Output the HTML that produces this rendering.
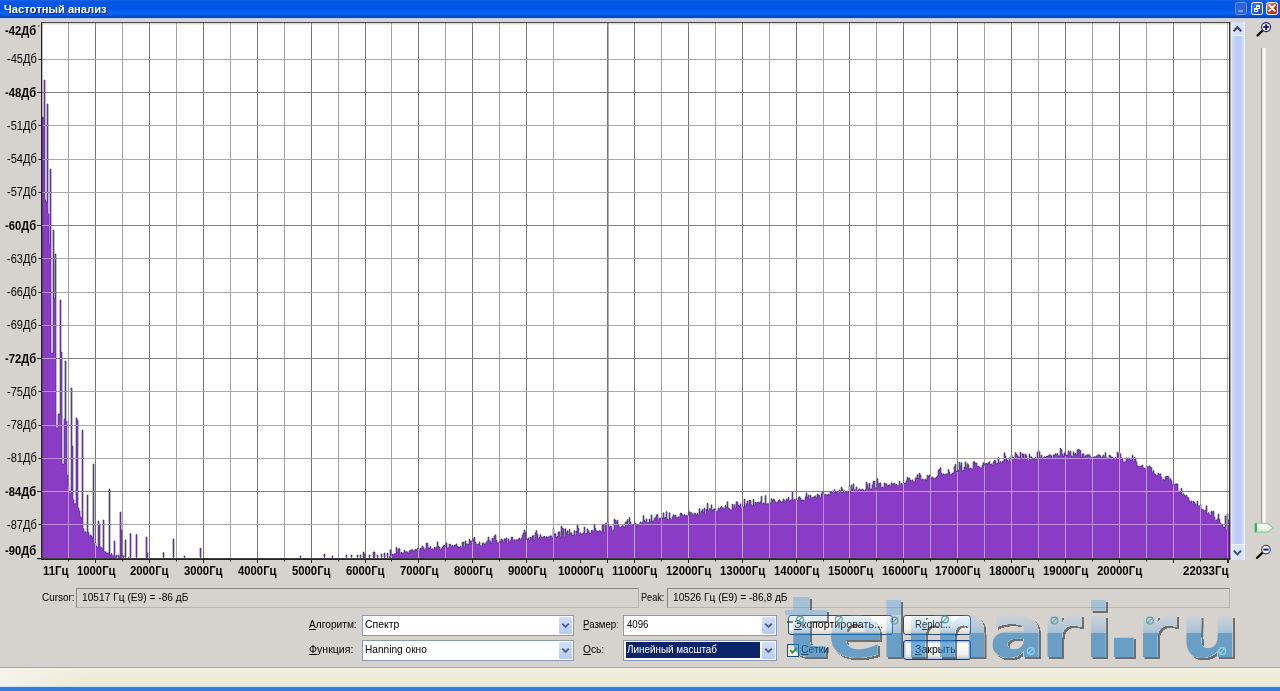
<!DOCTYPE html>
<html lang="ru"><head><meta charset="utf-8"><title>Частотный анализ</title>
<style>
html,body{margin:0;padding:0}
body{width:1280px;height:691px;overflow:hidden;position:relative;background:#d6d3ce;font-family:"Liberation Sans",sans-serif}
.abs{position:absolute}
.t{position:absolute;white-space:pre;line-height:1;transform-origin:0 50%;font-family:"Liberation Sans",sans-serif}
.t u{text-decoration:underline;text-underline-offset:1px}
#titlebar{position:absolute;left:0;top:0;width:1280px;height:18px;background:linear-gradient(#1a68ec 0,#0457e6 1.5px,#0054e4 9px,#0360f2 11.5px,#0668f8 13px,#0458e2 15px,#0c49c2 16.5px,#143fa8 18px)}
#tline{position:absolute;left:0;top:18px;width:1280px;height:1.6px;background:linear-gradient(#b4c8f2,#d3dbe8)}
.tb{position:absolute;top:2px;width:12.4px;height:12.6px;border-radius:2.5px;box-sizing:border-box;border:1px solid #fff}
.field{position:absolute;box-sizing:border-box;border:1px solid #8a8782;border-right-color:#b8b5b0;border-bottom-color:#b8b5b0;background:#d6d3ce}
.combo{position:absolute;box-sizing:border-box;border:1px solid #8b9bb5;background:#fff}
.combo .dd{position:absolute;right:1px;top:1px;bottom:1px;width:13px;background:linear-gradient(#d3defa,#b8cbf6);border-radius:1.5px}
.combo .dd svg{position:absolute;left:0;top:0}
.btn{position:absolute;box-sizing:border-box;border:1px solid #2d4f7c;border-radius:3px;background:linear-gradient(#fff,#f3f2ec 70%,#d9d6ca)}
</style></head><body>
<div id="titlebar"></div><div id="tline"></div>
<div class="tb" style="left:1235px;background:#2d63d6;border-color:#6d97ea"><div class="abs" style="left:2px;top:7px;width:5px;height:2px;background:#7da0ea"></div></div>
<div class="tb" style="left:1250.5px;background:linear-gradient(135deg,#4a7fe8,#1c47b8)"><div class="abs" style="left:4px;top:2px;width:4px;height:4px;border:1px solid #fff;border-top-width:2px;box-sizing:border-box"></div><div class="abs" style="left:2px;top:4.5px;width:4.5px;height:4px;border:1px solid #fff;border-top-width:2px;box-sizing:border-box;background:#2a58c8"></div></div>
<div class="tb" style="left:1265.5px;background:linear-gradient(135deg,#e88c6c,#c43a1c 60%,#b5310f)"><svg class="abs" style="left:0;top:0" width="10" height="10" viewBox="0 0 10 10"><path d="M2.2 2.2L7.8 7.8M7.8 2.2L2.2 7.8" stroke="#fff" stroke-width="1.8" stroke-linecap="round"/></svg></div>
<svg id="plot" width="1280" height="691" viewBox="0 0 1280 691" style="position:absolute;left:0;top:0;filter:blur(0.35px)"><defs><clipPath id="cp"><path d="M42,558V117.0H43V118.0H44V80H45V200.0H46V202.0H47V104H48V214.0H49V245.0H50V169H51V353.0H52V353.0H53V230H54V298.0H55V254H56V428.0H57V428.0H58V414.0H59V414.0H60V300H61V352.0H62V464.0H63V464.0H64V419.0H65V361H66V421.0H67V475.1H68V486.3H69V492.8H70V493.9H71V388H72V446H73V499.8H74V504.0H75V503.7H76V418H77V420H78V508.0H79V510.6H80V516.6H81V518.1H82V430H83V528.6H84V531.9H85V531.7H86V532.5H87V495H88V532.2H89V537.0H90V534.9H91V536.2H92V538.1H93V464H94V544.6H95V542.9H96V546.4H97V547.7H98V521H99V524H100V546.8H101V547.5H102V549.0H103V520H104V551.6H105V551.5H106V553.2H107V553.0H108V552.6H109V489H110V555.4H111V553.5H112V555.5H113V555.6H114V541H115V557.2H116V555.3H117V558H118V555.1H119V556.8H120V512H121V530H122V557.7H123V555.7H124V558H125V540H126V558H127V558H128V557.1H129V558H130V533.5H131V558H132V558H133V558H134V558H135V558H136V534.5H137V558H138V558H139V558H140V558H141V558H142V558H143V558H144V558H145V558H146V537H147V553H148V558H149V558H150V558H151V558H152V558H153V558H154V558H155V558H156V558H157V558H158V558H159V558H160V558H161V558H162V558H163V552.5H164V558H165V558H166V558H167V558H168V558H169V558H170V558H171V558H172V558H173V539H174V558H175V558H176V558H177V558H178V558H179V558H180V558H181V558H182V558H183V558H184V556H185V558H186V558H187V558H188V558H189V558H190V558H191V558H192V558H193V558H194V558H195V558H196V558H197V558H198V558H199V558H200V548H201V558H202V558H203V558H204V558H205V558H206V558H207V558H208V558H209V558H210V558H211V558H212V558H213V558H214V558H215V558H216V558H217V558H218V558H219V558H220V558H221V558H222V558H223V558H224V558H225V558H226V558H227V558H228V558H229V558H230V558H231V558H232V558H233V558H234V558H235V558H236V558H237V558H238V558H239V558H240V558H241V558H242V558H243V558H244V558H245V558H246V558H247V558H248V558H249V558H250V558H251V558H252V558H253V558H254V558H255V558H256V558H257V558H258V558H259V558H260V558H261V558H262V558H263V558H264V558H265V558H266V558H267V558H268V558H269V558H270V558H271V558H272V558H273V558H274V558H275V558H276V558H277V558H278V558H279V558H280V558H281V558H282V558H283V558H284V558H285V558H286V558H287V558H288V558H289V558H290V558H291V558H292V558H293V558H294V558H295V558H296V558H297V558H298V558H299V558H300V556H301V558H302V558H303V558H304V558H305V558H306V558H307V558H308V558H309V558H310V558H311V558H312V558H313V558H314V558H315V558H316V558H317V558H318V558H319V558H320V558H321V558H322V558H323V558H324V554H325V558H326V558H327V558H328V558H329V558H330V558H331V558H332V556H333V558H334V558H335V558H336V558H337V558H338V558H339V558H340V558H341V558H342V558H343V558H344V558H345V558H346V555H347V558H348V558H349V558H350V558H351V555H352V558H353V558H354V558H355V558H356V558H357V555H358V558H359V558H360V555H361V558H362V558H363V552H364V554H365V558H366V558H367V558H368V558H369V555H370V558H371V558H372V558H373V552H374V552H375V558H376V558H377V555H378V558H379V558H380V558H381V554H382V558H383V558H384V553H385V558H386V558H387V553H388V558H389V556.6H390V549.7H391V555.3H392V554.0H393V554.5H394V553.7H395V553.6H396V547.4H397V552.1H398V548.8H399V548.5H400V553.6H401V552.3H402V553.2H403V552.8H404V550.4H405V551.7H406V551.6H407V552.0H408V553.3H409V550.9H410V550.1H411V549.8H412V549.7H413V551.2H414V550.5H415V549.3H416V550.0H417V548.4H418V549.0H419V550.9H420V548.4H421V547.9H422V546.1H423V547.5H424V550.3H425V548.6H426V543.0H427V543.3H428V547.6H429V548.4H430V546.6H431V549.3H432V548.8H433V549.9H434V547.4H435V547.6H436V547.3H437V541.9H438V546.4H439V547.1H440V550.0H441V548.7H442V547.4H443V545.5H444V545.4H445V547.0H446V542.8H447V548.3H448V547.5H449V544.0H450V544.5H451V546.5H452V545.2H453V546.9H454V545.3H455V545.0H456V543.9H457V546.3H458V547.3H459V547.4H460V546.1H461V547.6H462V542.4H463V542.1H464V546.7H465V540.9H466V543.9H467V544.0H468V544.4H469V539.4H470V541.0H471V541.0H472V541.5H473V539.0H474V537.3H475V542.4H476V544.0H477V544.5H478V544.2H479V541.9H480V546.0H481V545.6H482V543.3H483V542.8H484V544.4H485V543.6H486V541.9H487V540.8H488V537.0H489V540.6H490V540.9H491V543.3H492V538.2H493V538.5H494V535.9H495V534.8H496V540.2H497V542.8H498V542.6H499V542.7H500V541.0H501V539.0H502V540.0H503V542.2H504V538.8H505V539.4H506V538.0H507V543.6H508V538.9H509V541.9H510V540.6H511V537.2H512V537.3H513V540.6H514V539.8H515V539.8H516V539.8H517V540.1H518V539.1H519V538.0H520V539.9H521V538.7H522V535.2H523V533.4H524V530.0H525V532.3H526V539.7H527V539.4H528V537.9H529V540.5H530V537.2H531V537.8H532V535.8H533V535.5H534V540.3H535V532.5H536V530.5H537V534.4H538V538.6H539V537.3H540V534.7H541V537.1H542V537.6H543V536.7H544V536.4H545V538.3H546V536.6H547V537.6H548V536.9H549V536.5H550V535.7H551V536.1H552V538.1H553V529.0H554V534.0H555V533.6H556V537.4H557V536.4H558V531.9H559V531.7H560V537.1H561V526.1H562V528.0H563V528.9H564V536.9H565V528.7H566V532.6H567V530.9H568V534.8H569V529.5H570V532.6H571V532.9H572V535.2H573V535.3H574V530.5H575V535.8H576V531.3H577V525.2H578V528.3H579V535.2H580V532.8H581V534.4H582V533.7H583V532.9H584V527.2H585V533.6H586V533.4H587V529.0H588V530.5H589V532.9H590V533.4H591V530.3H592V530.6H593V530.8H594V524.2H595V528.4H596V530.8H597V531.2H598V531.7H599V530.6H600V531.1H601V531.7H602V525.4H603V524.5H604V531.9H605V523.5H606V523.2H607V521.9H608V525.6H609V526.5H610V526.2H611V526.5H612V530.9H613V530.0H614V519.3H615V520.3H616V522.1H617V520.1H618V525.4H619V526.8H620V527.8H621V526.4H622V525.5H623V526.0H624V527.4H625V522.1H626V521.7H627V519.5H628V524.7H629V517.6H630V522.0H631V525.9H632V525.3H633V524.9H634V523.4H635V523.2H636V526.0H637V524.7H638V525.6H639V523.7H640V521.9H641V524.0H642V521.9H643V515.5H644V520.4H645V521.5H646V518.8H647V522.5H648V522.5H649V519.1H650V521.3H651V514.8H652V520.8H653V520.7H654V518.1H655V517.6H656V514.8H657V514.6H658V520.5H659V518.2H660V518.0H661V518.3H662V518.1H663V512.8H664V517.9H665V517.4H666V511.5H667V519.1H668V519.9H669V512.7H670V518.5H671V519.5H672V516.7H673V514.7H674V516.2H675V515.2H676V517.3H677V517.9H678V517.0H679V516.9H680V513.2H681V513.3H682V514.5H683V515.8H684V514.5H685V515.9H686V515.2H687V515.8H688V515.6H689V511.7H690V512.6H691V512.6H692V514.0H693V514.8H694V513.1H695V513.7H696V515.3H697V513.5H698V514.9H699V508.6H700V512.5H701V511.4H702V509.4H703V512.2H704V508.1H705V513.5H706V509.4H707V503.4H708V510.6H709V508.7H710V508.6H711V504.8H712V510.4H713V509.3H714V508.7H715V509.7H716V511.5H717V511.1H718V508.0H719V508.9H720V507.5H721V506.4H722V507.8H723V507.8H724V508.7H725V505.6H726V507.1H727V501.6H728V508.0H729V508.6H730V509.8H731V510.0H732V504.2H733V507.9H734V504.6H735V508.2H736V501.6H737V502.1H738V505.3H739V506.4H740V503.8H741V508.5H742V506.5H743V507.3H744V499.1H745V505.7H746V503.7H747V501.0H748V504.5H749V500.2H750V500.3H751V504.5H752V505.6H753V499.4H754V505.1H755V502.3H756V502.8H757V502.4H758V502.1H759V503.0H760V501.5H761V496.2H762V504.6H763V502.9H764V503.5H765V495.5H766V504.1H767V503.6H768V503.9H769V503.0H770V503.0H771V498.6H772V499.9H773V499.2H774V499.7H775V501.7H776V502.7H777V502.2H778V500.4H779V499.8H780V501.3H781V502.4H782V501.4H783V499.0H784V500.5H785V500.9H786V499.1H787V499.8H788V497.3H789V501.1H790V500.3H791V499.6H792V492.4H793V500.4H794V499.5H795V499.8H796V500.0H797V500.3H798V497.6H799V496.5H800V498.4H801V500.4H802V499.9H803V500.3H804V500.7H805V496.8H806V492.9H807V497.4H808V495.2H809V498.9H810V495.2H811V497.9H812V497.6H813V497.0H814V496.6H815V495.7H816V498.0H817V494.2H818V495.0H819V495.7H820V498.4H821V493.8H822V492.1H823V493.2H824V494.9H825V494.4H826V494.8H827V495.3H828V493.9H829V495.3H830V492.2H831V492.1H832V491.1H833V494.0H834V489.5H835V492.3H836V491.6H837V492.1H838V493.7H839V489.9H840V492.5H841V487.3H842V488.8H843V492.2H844V490.7H845V492.7H846V492.1H847V491.2H848V492.3H849V485.9H850V491.9H851V485.0H852V488.8H853V483.9H854V489.9H855V489.6H856V487.0H857V491.2H858V489.9H859V488.8H860V490.0H861V490.0H862V489.0H863V490.1H864V491.3H865V489.6H866V482.0H867V484.6H868V488.9H869V483.2H870V488.8H871V489.0H872V484.8H873V481.1H874V481.1H875V487.6H876V489.5H877V478.5H878V483.6H879V483.2H880V482.9H881V487.5H882V486.9H883V487.9H884V483.0H885V483.5H886V483.8H887V485.7H888V485.4H889V484.8H890V487.1H891V482.7H892V483.8H893V483.6H894V483.2H895V484.9H896V484.2H897V485.5H898V485.7H899V481.4H900V485.5H901V483.4H902V484.8H903V482.9H904V483.1H905V483.0H906V481.0H907V477.3H908V478.4H909V478.3H910V480.4H911V480.7H912V479.8H913V481.6H914V482.2H915V478.2H916V477.6H917V474.6H918V478.4H919V473.3H920V475.2H921V480.0H922V479.0H923V479.6H924V480.9H925V479.0H926V480.2H927V475.4H928V476.4H929V475.1H930V476.0H931V478.1H932V477.0H933V478.3H934V478.7H935V478.2H936V477.0H937V476.3H938V470.1H939V469.4H940V467.6H941V473.1H942V474.8H943V473.9H944V474.8H945V474.1H946V473.9H947V474.1H948V469.5H949V472.1H950V474.8H951V474.4H952V473.1H953V472.7H954V466.5H955V464.3H956V471.3H957V472.0H958V470.2H959V462.3H960V466.1H961V462.7H962V471.0H963V470.3H964V467.2H965V462.0H966V468.0H967V463.6H968V464.6H969V469.0H970V468.0H971V468.6H972V468.8H973V462.1H974V461.5H975V463.3H976V463.0H977V466.2H978V466.2H979V467.3H980V467.7H981V467.8H982V465.3H983V462.6H984V465.6H985V463.8H986V463.2H987V464.3H988V462.6H989V461.6H990V464.4H991V464.0H992V465.3H993V462.1H994V460.4H995V460.6H996V463.9H997V463.3H998V457.7H999V463.1H1000V461.7H1001V462.5H1002V461.4H1003V461.0H1004V452.7H1005V456.0H1006V459.3H1007V460.3H1008V461.7H1009V457.7H1010V461.8H1011V455.1H1012V456.9H1013V457.2H1014V458.6H1015V452.5H1016V454.1H1017V455.5H1018V456.7H1019V457.2H1020V452.1H1021V458.4H1022V453.7H1023V454.3H1024V458.3H1025V454.0H1026V455.7H1027V459.6H1028V460.5H1029V454.2H1030V456.7H1031V456.7H1032V459.2H1033V458.5H1034V459.0H1035V457.5H1036V458.5H1037V452.4H1038V451.0H1039V451.5H1040V457.7H1041V455.2H1042V458.5H1043V457.5H1044V456.7H1045V457.4H1046V456.4H1047V456.4H1048V455.5H1049V454.6H1050V455.1H1051V455.8H1052V457.6H1053V454.9H1054V455.2H1055V453.7H1056V454.5H1057V453.5H1058V455.8H1059V456.0H1060V448.4H1061V449.9H1062V454.2H1063V456.3H1064V452.8H1065V456.1H1066V455.0H1067V455.1H1068V450.9H1069V452.5H1070V451.4H1071V455.8H1072V457.0H1073V451.9H1074V454.3H1075V453.4H1076V455.1H1077V449.9H1078V449.2H1079V450.1H1080V450.5H1081V457.3H1082V454.3H1083V453.5H1084V457.0H1085V455.7H1086V454.9H1087V454.7H1088V454.8H1089V454.6H1090V456.6H1091V457.6H1092V457.5H1093V457.3H1094V456.7H1095V457.2H1096V455.9H1097V455.5H1098V454.5H1099V455.2H1100V455.7H1101V458.2H1102V457.0H1103V455.1H1104V456.5H1105V452.5H1106V457.6H1107V458.1H1108V458.3H1109V455.1H1110V455.7H1111V457.0H1112V457.2H1113V458.8H1114V458.2H1115V457.5H1116V458.6H1117V452.2H1118V453.8H1119V452.5H1120V453.9H1121V457.7H1122V459.1H1123V462.0H1124V462.0H1125V461.6H1126V457.9H1127V458.8H1128V457.8H1129V458.8H1130V459.6H1131V459.9H1132V455.4H1133V462.0H1134V457.4H1135V458.2H1136V461.8H1137V465.8H1138V466.3H1139V466.6H1140V466.4H1141V465.9H1142V465.1H1143V467.8H1144V468.4H1145V469.8H1146V466.5H1147V466.7H1148V466.7H1149V465.9H1150V467.0H1151V467.7H1152V472.8H1153V470.7H1154V473.7H1155V474.2H1156V475.9H1157V475.2H1158V473.1H1159V474.5H1160V473.8H1161V477.1H1162V480.5H1163V479.2H1164V480.4H1165V476.6H1166V476.2H1167V476.2H1168V476.5H1169V480.9H1170V478.6H1171V480.5H1172V484.6H1173V485.5H1174V484.7H1175V484.2H1176V483.6H1177V484.1H1178V491.2H1179V491.1H1180V493.1H1181V488.3H1182V494.6H1183V493.7H1184V495.0H1185V496.1H1186V495.4H1187V497.2H1188V497.9H1189V500.7H1190V501.7H1191V501.1H1192V503.6H1193V501.2H1194V502.4H1195V504.2H1196V504.9H1197V501.1H1198V505.8H1199V505.9H1200V505.1H1201V509.0H1202V509.6H1203V510.0H1204V510.8H1205V510.3H1206V505.8H1207V513.5H1208V512.6H1209V514.7H1210V515.4H1211V511.2H1212V512.3H1213V511.3H1214V517.3H1215V520.7H1216V520.3H1217V519.1H1218V514.0H1219V519.3H1220V523.2H1221V524.4H1222V524.7H1223V527.2H1224V527.3H1225V516H1226V529.8H1227V514H1228V520H1229V558Z"/></clipPath><clipPath id="box"><rect x="42" y="23" width="1187" height="535"/></clipPath><clipPath id="box2"><rect x="42.6" y="23" width="1186.4" height="534.1"/></clipPath></defs><rect x="41" y="22" width="1189" height="537" fill="#fff"/><g clip-path="url(#box)"><rect x="68" y="23" width="1" height="535" fill="#a2a2a2"/><rect x="95" y="23" width="1" height="535" fill="#747474"/><rect x="122" y="23" width="1" height="535" fill="#a2a2a2"/><rect x="149" y="23" width="1" height="535" fill="#747474"/><rect x="176" y="23" width="1" height="535" fill="#a2a2a2"/><rect x="203" y="23" width="1" height="535" fill="#747474"/><rect x="230" y="23" width="1" height="535" fill="#a2a2a2"/><rect x="257" y="23" width="1" height="535" fill="#747474"/><rect x="284" y="23" width="1" height="535" fill="#a2a2a2"/><rect x="311" y="23" width="1" height="535" fill="#747474"/><rect x="338" y="23" width="1" height="535" fill="#a2a2a2"/><rect x="365" y="23" width="1" height="535" fill="#747474"/><rect x="391" y="23" width="1" height="535" fill="#a2a2a2"/><rect x="418" y="23" width="1" height="535" fill="#747474"/><rect x="445" y="23" width="1" height="535" fill="#a2a2a2"/><rect x="472" y="23" width="1" height="535" fill="#747474"/><rect x="499" y="23" width="1" height="535" fill="#a2a2a2"/><rect x="526" y="23" width="1" height="535" fill="#747474"/><rect x="553" y="23" width="1" height="535" fill="#a2a2a2"/><rect x="607" y="23" width="1" height="535" fill="#747474"/><rect x="634" y="23" width="1" height="535" fill="#747474"/><rect x="661" y="23" width="1" height="535" fill="#a2a2a2"/><rect x="688" y="23" width="1" height="535" fill="#747474"/><rect x="715" y="23" width="1" height="535" fill="#a2a2a2"/><rect x="742" y="23" width="1" height="535" fill="#747474"/><rect x="769" y="23" width="1" height="535" fill="#a2a2a2"/><rect x="796" y="23" width="1" height="535" fill="#747474"/><rect x="823" y="23" width="1" height="535" fill="#a2a2a2"/><rect x="849" y="23" width="1" height="535" fill="#747474"/><rect x="876" y="23" width="1" height="535" fill="#a2a2a2"/><rect x="903" y="23" width="1" height="535" fill="#747474"/><rect x="930" y="23" width="1" height="535" fill="#a2a2a2"/><rect x="957" y="23" width="1" height="535" fill="#747474"/><rect x="984" y="23" width="1" height="535" fill="#a2a2a2"/><rect x="1011" y="23" width="1" height="535" fill="#747474"/><rect x="1038" y="23" width="1" height="535" fill="#a2a2a2"/><rect x="1065" y="23" width="1" height="535" fill="#747474"/><rect x="1092" y="23" width="1" height="535" fill="#a2a2a2"/><rect x="1119" y="23" width="1" height="535" fill="#747474"/><rect x="1146" y="23" width="1" height="535" fill="#a2a2a2"/><rect x="1173" y="23" width="1" height="535" fill="#747474"/><rect x="1200" y="23" width="1" height="535" fill="#a2a2a2"/><rect x="1227" y="23" width="1" height="535" fill="#747474" fill-opacity="0.55"/><rect x="42" y="59" width="1187" height="1" fill="#aaaaaa"/><rect x="42" y="92" width="1187" height="1" fill="#828282"/><rect x="42" y="125" width="1187" height="1" fill="#aaaaaa"/><rect x="42" y="159" width="1187" height="1" fill="#aaaaaa"/><rect x="42" y="192" width="1187" height="1" fill="#aaaaaa"/><rect x="42" y="225" width="1187" height="1" fill="#828282"/><rect x="42" y="258" width="1187" height="1" fill="#aaaaaa"/><rect x="42" y="292" width="1187" height="1" fill="#aaaaaa"/><rect x="42" y="325" width="1187" height="1" fill="#aaaaaa"/><rect x="42" y="358" width="1187" height="1" fill="#828282"/><rect x="42" y="391" width="1187" height="1" fill="#aaaaaa"/><rect x="42" y="425" width="1187" height="1" fill="#aaaaaa"/><rect x="42" y="458" width="1187" height="1" fill="#aaaaaa"/><rect x="42" y="491" width="1187" height="1" fill="#828282"/><rect x="42" y="524" width="1187" height="1" fill="#aaaaaa"/></g><g clip-path="url(#box)"><rect x="608" y="23" width="1" height="535" fill="#707070" fill-opacity="0.55"/></g><path d="M42,558V117.0H43V118.0H44V80H45V200.0H46V202.0H47V104H48V214.0H49V245.0H50V169H51V353.0H52V353.0H53V230H54V298.0H55V254H56V428.0H57V428.0H58V414.0H59V414.0H60V300H61V352.0H62V464.0H63V464.0H64V419.0H65V361H66V421.0H67V475.1H68V486.3H69V492.8H70V493.9H71V388H72V446H73V499.8H74V504.0H75V503.7H76V418H77V420H78V508.0H79V510.6H80V516.6H81V518.1H82V430H83V528.6H84V531.9H85V531.7H86V532.5H87V495H88V532.2H89V537.0H90V534.9H91V536.2H92V538.1H93V464H94V544.6H95V542.9H96V546.4H97V547.7H98V521H99V524H100V546.8H101V547.5H102V549.0H103V520H104V551.6H105V551.5H106V553.2H107V553.0H108V552.6H109V489H110V555.4H111V553.5H112V555.5H113V555.6H114V541H115V557.2H116V555.3H117V558H118V555.1H119V556.8H120V512H121V530H122V557.7H123V555.7H124V558H125V540H126V558H127V558H128V557.1H129V558H130V533.5H131V558H132V558H133V558H134V558H135V558H136V534.5H137V558H138V558H139V558H140V558H141V558H142V558H143V558H144V558H145V558H146V537H147V553H148V558H149V558H150V558H151V558H152V558H153V558H154V558H155V558H156V558H157V558H158V558H159V558H160V558H161V558H162V558H163V552.5H164V558H165V558H166V558H167V558H168V558H169V558H170V558H171V558H172V558H173V539H174V558H175V558H176V558H177V558H178V558H179V558H180V558H181V558H182V558H183V558H184V556H185V558H186V558H187V558H188V558H189V558H190V558H191V558H192V558H193V558H194V558H195V558H196V558H197V558H198V558H199V558H200V548H201V558H202V558H203V558H204V558H205V558H206V558H207V558H208V558H209V558H210V558H211V558H212V558H213V558H214V558H215V558H216V558H217V558H218V558H219V558H220V558H221V558H222V558H223V558H224V558H225V558H226V558H227V558H228V558H229V558H230V558H231V558H232V558H233V558H234V558H235V558H236V558H237V558H238V558H239V558H240V558H241V558H242V558H243V558H244V558H245V558H246V558H247V558H248V558H249V558H250V558H251V558H252V558H253V558H254V558H255V558H256V558H257V558H258V558H259V558H260V558H261V558H262V558H263V558H264V558H265V558H266V558H267V558H268V558H269V558H270V558H271V558H272V558H273V558H274V558H275V558H276V558H277V558H278V558H279V558H280V558H281V558H282V558H283V558H284V558H285V558H286V558H287V558H288V558H289V558H290V558H291V558H292V558H293V558H294V558H295V558H296V558H297V558H298V558H299V558H300V556H301V558H302V558H303V558H304V558H305V558H306V558H307V558H308V558H309V558H310V558H311V558H312V558H313V558H314V558H315V558H316V558H317V558H318V558H319V558H320V558H321V558H322V558H323V558H324V554H325V558H326V558H327V558H328V558H329V558H330V558H331V558H332V556H333V558H334V558H335V558H336V558H337V558H338V558H339V558H340V558H341V558H342V558H343V558H344V558H345V558H346V555H347V558H348V558H349V558H350V558H351V555H352V558H353V558H354V558H355V558H356V558H357V555H358V558H359V558H360V555H361V558H362V558H363V552H364V554H365V558H366V558H367V558H368V558H369V555H370V558H371V558H372V558H373V552H374V552H375V558H376V558H377V555H378V558H379V558H380V558H381V554H382V558H383V558H384V553H385V558H386V558H387V553H388V558H389V556.6H390V549.7H391V555.3H392V554.0H393V554.5H394V553.7H395V553.6H396V547.4H397V552.1H398V548.8H399V548.5H400V553.6H401V552.3H402V553.2H403V552.8H404V550.4H405V551.7H406V551.6H407V552.0H408V553.3H409V550.9H410V550.1H411V549.8H412V549.7H413V551.2H414V550.5H415V549.3H416V550.0H417V548.4H418V549.0H419V550.9H420V548.4H421V547.9H422V546.1H423V547.5H424V550.3H425V548.6H426V543.0H427V543.3H428V547.6H429V548.4H430V546.6H431V549.3H432V548.8H433V549.9H434V547.4H435V547.6H436V547.3H437V541.9H438V546.4H439V547.1H440V550.0H441V548.7H442V547.4H443V545.5H444V545.4H445V547.0H446V542.8H447V548.3H448V547.5H449V544.0H450V544.5H451V546.5H452V545.2H453V546.9H454V545.3H455V545.0H456V543.9H457V546.3H458V547.3H459V547.4H460V546.1H461V547.6H462V542.4H463V542.1H464V546.7H465V540.9H466V543.9H467V544.0H468V544.4H469V539.4H470V541.0H471V541.0H472V541.5H473V539.0H474V537.3H475V542.4H476V544.0H477V544.5H478V544.2H479V541.9H480V546.0H481V545.6H482V543.3H483V542.8H484V544.4H485V543.6H486V541.9H487V540.8H488V537.0H489V540.6H490V540.9H491V543.3H492V538.2H493V538.5H494V535.9H495V534.8H496V540.2H497V542.8H498V542.6H499V542.7H500V541.0H501V539.0H502V540.0H503V542.2H504V538.8H505V539.4H506V538.0H507V543.6H508V538.9H509V541.9H510V540.6H511V537.2H512V537.3H513V540.6H514V539.8H515V539.8H516V539.8H517V540.1H518V539.1H519V538.0H520V539.9H521V538.7H522V535.2H523V533.4H524V530.0H525V532.3H526V539.7H527V539.4H528V537.9H529V540.5H530V537.2H531V537.8H532V535.8H533V535.5H534V540.3H535V532.5H536V530.5H537V534.4H538V538.6H539V537.3H540V534.7H541V537.1H542V537.6H543V536.7H544V536.4H545V538.3H546V536.6H547V537.6H548V536.9H549V536.5H550V535.7H551V536.1H552V538.1H553V529.0H554V534.0H555V533.6H556V537.4H557V536.4H558V531.9H559V531.7H560V537.1H561V526.1H562V528.0H563V528.9H564V536.9H565V528.7H566V532.6H567V530.9H568V534.8H569V529.5H570V532.6H571V532.9H572V535.2H573V535.3H574V530.5H575V535.8H576V531.3H577V525.2H578V528.3H579V535.2H580V532.8H581V534.4H582V533.7H583V532.9H584V527.2H585V533.6H586V533.4H587V529.0H588V530.5H589V532.9H590V533.4H591V530.3H592V530.6H593V530.8H594V524.2H595V528.4H596V530.8H597V531.2H598V531.7H599V530.6H600V531.1H601V531.7H602V525.4H603V524.5H604V531.9H605V523.5H606V523.2H607V521.9H608V525.6H609V526.5H610V526.2H611V526.5H612V530.9H613V530.0H614V519.3H615V520.3H616V522.1H617V520.1H618V525.4H619V526.8H620V527.8H621V526.4H622V525.5H623V526.0H624V527.4H625V522.1H626V521.7H627V519.5H628V524.7H629V517.6H630V522.0H631V525.9H632V525.3H633V524.9H634V523.4H635V523.2H636V526.0H637V524.7H638V525.6H639V523.7H640V521.9H641V524.0H642V521.9H643V515.5H644V520.4H645V521.5H646V518.8H647V522.5H648V522.5H649V519.1H650V521.3H651V514.8H652V520.8H653V520.7H654V518.1H655V517.6H656V514.8H657V514.6H658V520.5H659V518.2H660V518.0H661V518.3H662V518.1H663V512.8H664V517.9H665V517.4H666V511.5H667V519.1H668V519.9H669V512.7H670V518.5H671V519.5H672V516.7H673V514.7H674V516.2H675V515.2H676V517.3H677V517.9H678V517.0H679V516.9H680V513.2H681V513.3H682V514.5H683V515.8H684V514.5H685V515.9H686V515.2H687V515.8H688V515.6H689V511.7H690V512.6H691V512.6H692V514.0H693V514.8H694V513.1H695V513.7H696V515.3H697V513.5H698V514.9H699V508.6H700V512.5H701V511.4H702V509.4H703V512.2H704V508.1H705V513.5H706V509.4H707V503.4H708V510.6H709V508.7H710V508.6H711V504.8H712V510.4H713V509.3H714V508.7H715V509.7H716V511.5H717V511.1H718V508.0H719V508.9H720V507.5H721V506.4H722V507.8H723V507.8H724V508.7H725V505.6H726V507.1H727V501.6H728V508.0H729V508.6H730V509.8H731V510.0H732V504.2H733V507.9H734V504.6H735V508.2H736V501.6H737V502.1H738V505.3H739V506.4H740V503.8H741V508.5H742V506.5H743V507.3H744V499.1H745V505.7H746V503.7H747V501.0H748V504.5H749V500.2H750V500.3H751V504.5H752V505.6H753V499.4H754V505.1H755V502.3H756V502.8H757V502.4H758V502.1H759V503.0H760V501.5H761V496.2H762V504.6H763V502.9H764V503.5H765V495.5H766V504.1H767V503.6H768V503.9H769V503.0H770V503.0H771V498.6H772V499.9H773V499.2H774V499.7H775V501.7H776V502.7H777V502.2H778V500.4H779V499.8H780V501.3H781V502.4H782V501.4H783V499.0H784V500.5H785V500.9H786V499.1H787V499.8H788V497.3H789V501.1H790V500.3H791V499.6H792V492.4H793V500.4H794V499.5H795V499.8H796V500.0H797V500.3H798V497.6H799V496.5H800V498.4H801V500.4H802V499.9H803V500.3H804V500.7H805V496.8H806V492.9H807V497.4H808V495.2H809V498.9H810V495.2H811V497.9H812V497.6H813V497.0H814V496.6H815V495.7H816V498.0H817V494.2H818V495.0H819V495.7H820V498.4H821V493.8H822V492.1H823V493.2H824V494.9H825V494.4H826V494.8H827V495.3H828V493.9H829V495.3H830V492.2H831V492.1H832V491.1H833V494.0H834V489.5H835V492.3H836V491.6H837V492.1H838V493.7H839V489.9H840V492.5H841V487.3H842V488.8H843V492.2H844V490.7H845V492.7H846V492.1H847V491.2H848V492.3H849V485.9H850V491.9H851V485.0H852V488.8H853V483.9H854V489.9H855V489.6H856V487.0H857V491.2H858V489.9H859V488.8H860V490.0H861V490.0H862V489.0H863V490.1H864V491.3H865V489.6H866V482.0H867V484.6H868V488.9H869V483.2H870V488.8H871V489.0H872V484.8H873V481.1H874V481.1H875V487.6H876V489.5H877V478.5H878V483.6H879V483.2H880V482.9H881V487.5H882V486.9H883V487.9H884V483.0H885V483.5H886V483.8H887V485.7H888V485.4H889V484.8H890V487.1H891V482.7H892V483.8H893V483.6H894V483.2H895V484.9H896V484.2H897V485.5H898V485.7H899V481.4H900V485.5H901V483.4H902V484.8H903V482.9H904V483.1H905V483.0H906V481.0H907V477.3H908V478.4H909V478.3H910V480.4H911V480.7H912V479.8H913V481.6H914V482.2H915V478.2H916V477.6H917V474.6H918V478.4H919V473.3H920V475.2H921V480.0H922V479.0H923V479.6H924V480.9H925V479.0H926V480.2H927V475.4H928V476.4H929V475.1H930V476.0H931V478.1H932V477.0H933V478.3H934V478.7H935V478.2H936V477.0H937V476.3H938V470.1H939V469.4H940V467.6H941V473.1H942V474.8H943V473.9H944V474.8H945V474.1H946V473.9H947V474.1H948V469.5H949V472.1H950V474.8H951V474.4H952V473.1H953V472.7H954V466.5H955V464.3H956V471.3H957V472.0H958V470.2H959V462.3H960V466.1H961V462.7H962V471.0H963V470.3H964V467.2H965V462.0H966V468.0H967V463.6H968V464.6H969V469.0H970V468.0H971V468.6H972V468.8H973V462.1H974V461.5H975V463.3H976V463.0H977V466.2H978V466.2H979V467.3H980V467.7H981V467.8H982V465.3H983V462.6H984V465.6H985V463.8H986V463.2H987V464.3H988V462.6H989V461.6H990V464.4H991V464.0H992V465.3H993V462.1H994V460.4H995V460.6H996V463.9H997V463.3H998V457.7H999V463.1H1000V461.7H1001V462.5H1002V461.4H1003V461.0H1004V452.7H1005V456.0H1006V459.3H1007V460.3H1008V461.7H1009V457.7H1010V461.8H1011V455.1H1012V456.9H1013V457.2H1014V458.6H1015V452.5H1016V454.1H1017V455.5H1018V456.7H1019V457.2H1020V452.1H1021V458.4H1022V453.7H1023V454.3H1024V458.3H1025V454.0H1026V455.7H1027V459.6H1028V460.5H1029V454.2H1030V456.7H1031V456.7H1032V459.2H1033V458.5H1034V459.0H1035V457.5H1036V458.5H1037V452.4H1038V451.0H1039V451.5H1040V457.7H1041V455.2H1042V458.5H1043V457.5H1044V456.7H1045V457.4H1046V456.4H1047V456.4H1048V455.5H1049V454.6H1050V455.1H1051V455.8H1052V457.6H1053V454.9H1054V455.2H1055V453.7H1056V454.5H1057V453.5H1058V455.8H1059V456.0H1060V448.4H1061V449.9H1062V454.2H1063V456.3H1064V452.8H1065V456.1H1066V455.0H1067V455.1H1068V450.9H1069V452.5H1070V451.4H1071V455.8H1072V457.0H1073V451.9H1074V454.3H1075V453.4H1076V455.1H1077V449.9H1078V449.2H1079V450.1H1080V450.5H1081V457.3H1082V454.3H1083V453.5H1084V457.0H1085V455.7H1086V454.9H1087V454.7H1088V454.8H1089V454.6H1090V456.6H1091V457.6H1092V457.5H1093V457.3H1094V456.7H1095V457.2H1096V455.9H1097V455.5H1098V454.5H1099V455.2H1100V455.7H1101V458.2H1102V457.0H1103V455.1H1104V456.5H1105V452.5H1106V457.6H1107V458.1H1108V458.3H1109V455.1H1110V455.7H1111V457.0H1112V457.2H1113V458.8H1114V458.2H1115V457.5H1116V458.6H1117V452.2H1118V453.8H1119V452.5H1120V453.9H1121V457.7H1122V459.1H1123V462.0H1124V462.0H1125V461.6H1126V457.9H1127V458.8H1128V457.8H1129V458.8H1130V459.6H1131V459.9H1132V455.4H1133V462.0H1134V457.4H1135V458.2H1136V461.8H1137V465.8H1138V466.3H1139V466.6H1140V466.4H1141V465.9H1142V465.1H1143V467.8H1144V468.4H1145V469.8H1146V466.5H1147V466.7H1148V466.7H1149V465.9H1150V467.0H1151V467.7H1152V472.8H1153V470.7H1154V473.7H1155V474.2H1156V475.9H1157V475.2H1158V473.1H1159V474.5H1160V473.8H1161V477.1H1162V480.5H1163V479.2H1164V480.4H1165V476.6H1166V476.2H1167V476.2H1168V476.5H1169V480.9H1170V478.6H1171V480.5H1172V484.6H1173V485.5H1174V484.7H1175V484.2H1176V483.6H1177V484.1H1178V491.2H1179V491.1H1180V493.1H1181V488.3H1182V494.6H1183V493.7H1184V495.0H1185V496.1H1186V495.4H1187V497.2H1188V497.9H1189V500.7H1190V501.7H1191V501.1H1192V503.6H1193V501.2H1194V502.4H1195V504.2H1196V504.9H1197V501.1H1198V505.8H1199V505.9H1200V505.1H1201V509.0H1202V509.6H1203V510.0H1204V510.8H1205V510.3H1206V505.8H1207V513.5H1208V512.6H1209V514.7H1210V515.4H1211V511.2H1212V512.3H1213V511.3H1214V517.3H1215V520.7H1216V520.3H1217V519.1H1218V514.0H1219V519.3H1220V523.2H1221V524.4H1222V524.7H1223V527.2H1224V527.3H1225V516H1226V529.8H1227V514H1228V520H1229V558Z" fill="#8a3cc6" shape-rendering="crispEdges"/><g clip-path="url(#box2)"><path d="M42,558V117.0H43V118.0H44V80H45V200.0H46V202.0H47V104H48V214.0H49V245.0H50V169H51V353.0H52V353.0H53V230H54V298.0H55V254H56V428.0H57V428.0H58V414.0H59V414.0H60V300H61V352.0H62V464.0H63V464.0H64V419.0H65V361H66V421.0H67V475.1H68V486.3H69V492.8H70V493.9H71V388H72V446H73V499.8H74V504.0H75V503.7H76V418H77V420H78V508.0H79V510.6H80V516.6H81V518.1H82V430H83V528.6H84V531.9H85V531.7H86V532.5H87V495H88V532.2H89V537.0H90V534.9H91V536.2H92V538.1H93V464H94V544.6H95V542.9H96V546.4H97V547.7H98V521H99V524H100V546.8H101V547.5H102V549.0H103V520H104V551.6H105V551.5H106V553.2H107V553.0H108V552.6H109V489H110V555.4H111V553.5H112V555.5H113V555.6H114V541H115V557.2H116V555.3H117V558H118V555.1H119V556.8H120V512H121V530H122V557.7H123V555.7H124V558H125V540H126V558H127V558H128V557.1H129V558H130V533.5H131V558H132V558H133V558H134V558H135V558H136V534.5H137V558H138V558H139V558H140V558H141V558H142V558H143V558H144V558H145V558H146V537H147V553H148V558H149V558H150V558H151V558H152V558H153V558H154V558H155V558H156V558H157V558H158V558H159V558H160V558H161V558H162V558H163V552.5H164V558H165V558H166V558H167V558H168V558H169V558H170V558H171V558H172V558H173V539H174V558H175V558H176V558H177V558H178V558H179V558H180V558H181V558H182V558H183V558H184V556H185V558H186V558H187V558H188V558H189V558H190V558H191V558H192V558H193V558H194V558H195V558H196V558H197V558H198V558H199V558H200V548H201V558H202V558H203V558H204V558H205V558H206V558H207V558H208V558H209V558H210V558H211V558H212V558H213V558H214V558H215V558H216V558H217V558H218V558H219V558H220V558H221V558H222V558H223V558H224V558H225V558H226V558H227V558H228V558H229V558H230V558H231V558H232V558H233V558H234V558H235V558H236V558H237V558H238V558H239V558H240V558H241V558H242V558H243V558H244V558H245V558H246V558H247V558H248V558H249V558H250V558H251V558H252V558H253V558H254V558H255V558H256V558H257V558H258V558H259V558H260V558H261V558H262V558H263V558H264V558H265V558H266V558H267V558H268V558H269V558H270V558H271V558H272V558H273V558H274V558H275V558H276V558H277V558H278V558H279V558H280V558H281V558H282V558H283V558H284V558H285V558H286V558H287V558H288V558H289V558H290V558H291V558H292V558H293V558H294V558H295V558H296V558H297V558H298V558H299V558H300V556H301V558H302V558H303V558H304V558H305V558H306V558H307V558H308V558H309V558H310V558H311V558H312V558H313V558H314V558H315V558H316V558H317V558H318V558H319V558H320V558H321V558H322V558H323V558H324V554H325V558H326V558H327V558H328V558H329V558H330V558H331V558H332V556H333V558H334V558H335V558H336V558H337V558H338V558H339V558H340V558H341V558H342V558H343V558H344V558H345V558H346V555H347V558H348V558H349V558H350V558H351V555H352V558H353V558H354V558H355V558H356V558H357V555H358V558H359V558H360V555H361V558H362V558H363V552H364V554H365V558H366V558H367V558H368V558H369V555H370V558H371V558H372V558H373V552H374V552H375V558H376V558H377V555H378V558H379V558H380V558H381V554H382V558H383V558H384V553H385V558H386V558H387V553H388V558H389V556.6H390V549.7H391V555.3H392V554.0H393V554.5H394V553.7H395V553.6H396V547.4H397V552.1H398V548.8H399V548.5H400V553.6H401V552.3H402V553.2H403V552.8H404V550.4H405V551.7H406V551.6H407V552.0H408V553.3H409V550.9H410V550.1H411V549.8H412V549.7H413V551.2H414V550.5H415V549.3H416V550.0H417V548.4H418V549.0H419V550.9H420V548.4H421V547.9H422V546.1H423V547.5H424V550.3H425V548.6H426V543.0H427V543.3H428V547.6H429V548.4H430V546.6H431V549.3H432V548.8H433V549.9H434V547.4H435V547.6H436V547.3H437V541.9H438V546.4H439V547.1H440V550.0H441V548.7H442V547.4H443V545.5H444V545.4H445V547.0H446V542.8H447V548.3H448V547.5H449V544.0H450V544.5H451V546.5H452V545.2H453V546.9H454V545.3H455V545.0H456V543.9H457V546.3H458V547.3H459V547.4H460V546.1H461V547.6H462V542.4H463V542.1H464V546.7H465V540.9H466V543.9H467V544.0H468V544.4H469V539.4H470V541.0H471V541.0H472V541.5H473V539.0H474V537.3H475V542.4H476V544.0H477V544.5H478V544.2H479V541.9H480V546.0H481V545.6H482V543.3H483V542.8H484V544.4H485V543.6H486V541.9H487V540.8H488V537.0H489V540.6H490V540.9H491V543.3H492V538.2H493V538.5H494V535.9H495V534.8H496V540.2H497V542.8H498V542.6H499V542.7H500V541.0H501V539.0H502V540.0H503V542.2H504V538.8H505V539.4H506V538.0H507V543.6H508V538.9H509V541.9H510V540.6H511V537.2H512V537.3H513V540.6H514V539.8H515V539.8H516V539.8H517V540.1H518V539.1H519V538.0H520V539.9H521V538.7H522V535.2H523V533.4H524V530.0H525V532.3H526V539.7H527V539.4H528V537.9H529V540.5H530V537.2H531V537.8H532V535.8H533V535.5H534V540.3H535V532.5H536V530.5H537V534.4H538V538.6H539V537.3H540V534.7H541V537.1H542V537.6H543V536.7H544V536.4H545V538.3H546V536.6H547V537.6H548V536.9H549V536.5H550V535.7H551V536.1H552V538.1H553V529.0H554V534.0H555V533.6H556V537.4H557V536.4H558V531.9H559V531.7H560V537.1H561V526.1H562V528.0H563V528.9H564V536.9H565V528.7H566V532.6H567V530.9H568V534.8H569V529.5H570V532.6H571V532.9H572V535.2H573V535.3H574V530.5H575V535.8H576V531.3H577V525.2H578V528.3H579V535.2H580V532.8H581V534.4H582V533.7H583V532.9H584V527.2H585V533.6H586V533.4H587V529.0H588V530.5H589V532.9H590V533.4H591V530.3H592V530.6H593V530.8H594V524.2H595V528.4H596V530.8H597V531.2H598V531.7H599V530.6H600V531.1H601V531.7H602V525.4H603V524.5H604V531.9H605V523.5H606V523.2H607V521.9H608V525.6H609V526.5H610V526.2H611V526.5H612V530.9H613V530.0H614V519.3H615V520.3H616V522.1H617V520.1H618V525.4H619V526.8H620V527.8H621V526.4H622V525.5H623V526.0H624V527.4H625V522.1H626V521.7H627V519.5H628V524.7H629V517.6H630V522.0H631V525.9H632V525.3H633V524.9H634V523.4H635V523.2H636V526.0H637V524.7H638V525.6H639V523.7H640V521.9H641V524.0H642V521.9H643V515.5H644V520.4H645V521.5H646V518.8H647V522.5H648V522.5H649V519.1H650V521.3H651V514.8H652V520.8H653V520.7H654V518.1H655V517.6H656V514.8H657V514.6H658V520.5H659V518.2H660V518.0H661V518.3H662V518.1H663V512.8H664V517.9H665V517.4H666V511.5H667V519.1H668V519.9H669V512.7H670V518.5H671V519.5H672V516.7H673V514.7H674V516.2H675V515.2H676V517.3H677V517.9H678V517.0H679V516.9H680V513.2H681V513.3H682V514.5H683V515.8H684V514.5H685V515.9H686V515.2H687V515.8H688V515.6H689V511.7H690V512.6H691V512.6H692V514.0H693V514.8H694V513.1H695V513.7H696V515.3H697V513.5H698V514.9H699V508.6H700V512.5H701V511.4H702V509.4H703V512.2H704V508.1H705V513.5H706V509.4H707V503.4H708V510.6H709V508.7H710V508.6H711V504.8H712V510.4H713V509.3H714V508.7H715V509.7H716V511.5H717V511.1H718V508.0H719V508.9H720V507.5H721V506.4H722V507.8H723V507.8H724V508.7H725V505.6H726V507.1H727V501.6H728V508.0H729V508.6H730V509.8H731V510.0H732V504.2H733V507.9H734V504.6H735V508.2H736V501.6H737V502.1H738V505.3H739V506.4H740V503.8H741V508.5H742V506.5H743V507.3H744V499.1H745V505.7H746V503.7H747V501.0H748V504.5H749V500.2H750V500.3H751V504.5H752V505.6H753V499.4H754V505.1H755V502.3H756V502.8H757V502.4H758V502.1H759V503.0H760V501.5H761V496.2H762V504.6H763V502.9H764V503.5H765V495.5H766V504.1H767V503.6H768V503.9H769V503.0H770V503.0H771V498.6H772V499.9H773V499.2H774V499.7H775V501.7H776V502.7H777V502.2H778V500.4H779V499.8H780V501.3H781V502.4H782V501.4H783V499.0H784V500.5H785V500.9H786V499.1H787V499.8H788V497.3H789V501.1H790V500.3H791V499.6H792V492.4H793V500.4H794V499.5H795V499.8H796V500.0H797V500.3H798V497.6H799V496.5H800V498.4H801V500.4H802V499.9H803V500.3H804V500.7H805V496.8H806V492.9H807V497.4H808V495.2H809V498.9H810V495.2H811V497.9H812V497.6H813V497.0H814V496.6H815V495.7H816V498.0H817V494.2H818V495.0H819V495.7H820V498.4H821V493.8H822V492.1H823V493.2H824V494.9H825V494.4H826V494.8H827V495.3H828V493.9H829V495.3H830V492.2H831V492.1H832V491.1H833V494.0H834V489.5H835V492.3H836V491.6H837V492.1H838V493.7H839V489.9H840V492.5H841V487.3H842V488.8H843V492.2H844V490.7H845V492.7H846V492.1H847V491.2H848V492.3H849V485.9H850V491.9H851V485.0H852V488.8H853V483.9H854V489.9H855V489.6H856V487.0H857V491.2H858V489.9H859V488.8H860V490.0H861V490.0H862V489.0H863V490.1H864V491.3H865V489.6H866V482.0H867V484.6H868V488.9H869V483.2H870V488.8H871V489.0H872V484.8H873V481.1H874V481.1H875V487.6H876V489.5H877V478.5H878V483.6H879V483.2H880V482.9H881V487.5H882V486.9H883V487.9H884V483.0H885V483.5H886V483.8H887V485.7H888V485.4H889V484.8H890V487.1H891V482.7H892V483.8H893V483.6H894V483.2H895V484.9H896V484.2H897V485.5H898V485.7H899V481.4H900V485.5H901V483.4H902V484.8H903V482.9H904V483.1H905V483.0H906V481.0H907V477.3H908V478.4H909V478.3H910V480.4H911V480.7H912V479.8H913V481.6H914V482.2H915V478.2H916V477.6H917V474.6H918V478.4H919V473.3H920V475.2H921V480.0H922V479.0H923V479.6H924V480.9H925V479.0H926V480.2H927V475.4H928V476.4H929V475.1H930V476.0H931V478.1H932V477.0H933V478.3H934V478.7H935V478.2H936V477.0H937V476.3H938V470.1H939V469.4H940V467.6H941V473.1H942V474.8H943V473.9H944V474.8H945V474.1H946V473.9H947V474.1H948V469.5H949V472.1H950V474.8H951V474.4H952V473.1H953V472.7H954V466.5H955V464.3H956V471.3H957V472.0H958V470.2H959V462.3H960V466.1H961V462.7H962V471.0H963V470.3H964V467.2H965V462.0H966V468.0H967V463.6H968V464.6H969V469.0H970V468.0H971V468.6H972V468.8H973V462.1H974V461.5H975V463.3H976V463.0H977V466.2H978V466.2H979V467.3H980V467.7H981V467.8H982V465.3H983V462.6H984V465.6H985V463.8H986V463.2H987V464.3H988V462.6H989V461.6H990V464.4H991V464.0H992V465.3H993V462.1H994V460.4H995V460.6H996V463.9H997V463.3H998V457.7H999V463.1H1000V461.7H1001V462.5H1002V461.4H1003V461.0H1004V452.7H1005V456.0H1006V459.3H1007V460.3H1008V461.7H1009V457.7H1010V461.8H1011V455.1H1012V456.9H1013V457.2H1014V458.6H1015V452.5H1016V454.1H1017V455.5H1018V456.7H1019V457.2H1020V452.1H1021V458.4H1022V453.7H1023V454.3H1024V458.3H1025V454.0H1026V455.7H1027V459.6H1028V460.5H1029V454.2H1030V456.7H1031V456.7H1032V459.2H1033V458.5H1034V459.0H1035V457.5H1036V458.5H1037V452.4H1038V451.0H1039V451.5H1040V457.7H1041V455.2H1042V458.5H1043V457.5H1044V456.7H1045V457.4H1046V456.4H1047V456.4H1048V455.5H1049V454.6H1050V455.1H1051V455.8H1052V457.6H1053V454.9H1054V455.2H1055V453.7H1056V454.5H1057V453.5H1058V455.8H1059V456.0H1060V448.4H1061V449.9H1062V454.2H1063V456.3H1064V452.8H1065V456.1H1066V455.0H1067V455.1H1068V450.9H1069V452.5H1070V451.4H1071V455.8H1072V457.0H1073V451.9H1074V454.3H1075V453.4H1076V455.1H1077V449.9H1078V449.2H1079V450.1H1080V450.5H1081V457.3H1082V454.3H1083V453.5H1084V457.0H1085V455.7H1086V454.9H1087V454.7H1088V454.8H1089V454.6H1090V456.6H1091V457.6H1092V457.5H1093V457.3H1094V456.7H1095V457.2H1096V455.9H1097V455.5H1098V454.5H1099V455.2H1100V455.7H1101V458.2H1102V457.0H1103V455.1H1104V456.5H1105V452.5H1106V457.6H1107V458.1H1108V458.3H1109V455.1H1110V455.7H1111V457.0H1112V457.2H1113V458.8H1114V458.2H1115V457.5H1116V458.6H1117V452.2H1118V453.8H1119V452.5H1120V453.9H1121V457.7H1122V459.1H1123V462.0H1124V462.0H1125V461.6H1126V457.9H1127V458.8H1128V457.8H1129V458.8H1130V459.6H1131V459.9H1132V455.4H1133V462.0H1134V457.4H1135V458.2H1136V461.8H1137V465.8H1138V466.3H1139V466.6H1140V466.4H1141V465.9H1142V465.1H1143V467.8H1144V468.4H1145V469.8H1146V466.5H1147V466.7H1148V466.7H1149V465.9H1150V467.0H1151V467.7H1152V472.8H1153V470.7H1154V473.7H1155V474.2H1156V475.9H1157V475.2H1158V473.1H1159V474.5H1160V473.8H1161V477.1H1162V480.5H1163V479.2H1164V480.4H1165V476.6H1166V476.2H1167V476.2H1168V476.5H1169V480.9H1170V478.6H1171V480.5H1172V484.6H1173V485.5H1174V484.7H1175V484.2H1176V483.6H1177V484.1H1178V491.2H1179V491.1H1180V493.1H1181V488.3H1182V494.6H1183V493.7H1184V495.0H1185V496.1H1186V495.4H1187V497.2H1188V497.9H1189V500.7H1190V501.7H1191V501.1H1192V503.6H1193V501.2H1194V502.4H1195V504.2H1196V504.9H1197V501.1H1198V505.8H1199V505.9H1200V505.1H1201V509.0H1202V509.6H1203V510.0H1204V510.8H1205V510.3H1206V505.8H1207V513.5H1208V512.6H1209V514.7H1210V515.4H1211V511.2H1212V512.3H1213V511.3H1214V517.3H1215V520.7H1216V520.3H1217V519.1H1218V514.0H1219V519.3H1220V523.2H1221V524.4H1222V524.7H1223V527.2H1224V527.3H1225V516H1226V529.8H1227V514H1228V520H1229V558Z" fill="none" stroke="#3a3064" stroke-opacity="0.9" stroke-width="0.7"/></g><g clip-path="url(#cp)"><rect x="68" y="23" width="1" height="535" fill="#bd8fe0"/><rect x="95" y="23" width="1" height="535" fill="#c79fe6"/><rect x="122" y="23" width="1" height="535" fill="#bd8fe0"/><rect x="149" y="23" width="1" height="535" fill="#c79fe6"/><rect x="176" y="23" width="1" height="535" fill="#bd8fe0"/><rect x="203" y="23" width="1" height="535" fill="#c79fe6"/><rect x="230" y="23" width="1" height="535" fill="#bd8fe0"/><rect x="257" y="23" width="1" height="535" fill="#c79fe6"/><rect x="284" y="23" width="1" height="535" fill="#bd8fe0"/><rect x="311" y="23" width="1" height="535" fill="#c79fe6"/><rect x="338" y="23" width="1" height="535" fill="#bd8fe0"/><rect x="365" y="23" width="1" height="535" fill="#c79fe6"/><rect x="391" y="23" width="1" height="535" fill="#bd8fe0"/><rect x="418" y="23" width="1" height="535" fill="#c79fe6"/><rect x="445" y="23" width="1" height="535" fill="#bd8fe0"/><rect x="472" y="23" width="1" height="535" fill="#c79fe6"/><rect x="499" y="23" width="1" height="535" fill="#bd8fe0"/><rect x="526" y="23" width="1" height="535" fill="#c79fe6"/><rect x="553" y="23" width="1" height="535" fill="#bd8fe0"/><rect x="607" y="23" width="1" height="535" fill="#c79fe6"/><rect x="634" y="23" width="1" height="535" fill="#c79fe6"/><rect x="661" y="23" width="1" height="535" fill="#bd8fe0"/><rect x="688" y="23" width="1" height="535" fill="#c79fe6"/><rect x="715" y="23" width="1" height="535" fill="#bd8fe0"/><rect x="742" y="23" width="1" height="535" fill="#c79fe6"/><rect x="769" y="23" width="1" height="535" fill="#bd8fe0"/><rect x="796" y="23" width="1" height="535" fill="#c79fe6"/><rect x="823" y="23" width="1" height="535" fill="#bd8fe0"/><rect x="849" y="23" width="1" height="535" fill="#c79fe6"/><rect x="876" y="23" width="1" height="535" fill="#bd8fe0"/><rect x="903" y="23" width="1" height="535" fill="#c79fe6"/><rect x="930" y="23" width="1" height="535" fill="#bd8fe0"/><rect x="957" y="23" width="1" height="535" fill="#c79fe6"/><rect x="984" y="23" width="1" height="535" fill="#bd8fe0"/><rect x="1011" y="23" width="1" height="535" fill="#c79fe6"/><rect x="1038" y="23" width="1" height="535" fill="#bd8fe0"/><rect x="1065" y="23" width="1" height="535" fill="#c79fe6"/><rect x="1092" y="23" width="1" height="535" fill="#bd8fe0"/><rect x="1119" y="23" width="1" height="535" fill="#c79fe6"/><rect x="1146" y="23" width="1" height="535" fill="#bd8fe0"/><rect x="1173" y="23" width="1" height="535" fill="#c79fe6"/><rect x="1200" y="23" width="1" height="535" fill="#bd8fe0"/><rect x="1227" y="23" width="1" height="535" fill="#c79fe6" fill-opacity="0.55"/><rect x="42" y="59" width="1187" height="1" fill="#bd8fe0"/><rect x="42" y="92" width="1187" height="1" fill="#c79fe6"/><rect x="42" y="125" width="1187" height="1" fill="#bd8fe0"/><rect x="42" y="159" width="1187" height="1" fill="#bd8fe0"/><rect x="42" y="192" width="1187" height="1" fill="#bd8fe0"/><rect x="42" y="225" width="1187" height="1" fill="#c79fe6"/><rect x="42" y="258" width="1187" height="1" fill="#bd8fe0"/><rect x="42" y="292" width="1187" height="1" fill="#bd8fe0"/><rect x="42" y="325" width="1187" height="1" fill="#bd8fe0"/><rect x="42" y="358" width="1187" height="1" fill="#c79fe6"/><rect x="42" y="391" width="1187" height="1" fill="#bd8fe0"/><rect x="42" y="425" width="1187" height="1" fill="#bd8fe0"/><rect x="42" y="458" width="1187" height="1" fill="#bd8fe0"/><rect x="42" y="491" width="1187" height="1" fill="#c79fe6"/><rect x="42" y="524" width="1187" height="1" fill="#bd8fe0"/></g><rect x="41" y="22" width="1189" height="1.2" fill="#4a4a4a"/><rect x="42" y="23.6" width="1187" height="1" fill="#c8ccc8" fill-opacity="0.6"/><rect x="41" y="22" width="1.3" height="537" fill="#222"/><rect x="1229" y="22" width="1.3" height="537" fill="#333"/><rect x="41" y="558.2" width="1189.3" height="1.7" fill="#111"/><rect x="68" y="559" width="1" height="2.5" fill="#222"/><rect x="95" y="559" width="1" height="4" fill="#222"/><rect x="122" y="559" width="1" height="2.5" fill="#222"/><rect x="149" y="559" width="1" height="4" fill="#222"/><rect x="176" y="559" width="1" height="2.5" fill="#222"/><rect x="203" y="559" width="1" height="4" fill="#222"/><rect x="230" y="559" width="1" height="2.5" fill="#222"/><rect x="257" y="559" width="1" height="4" fill="#222"/><rect x="284" y="559" width="1" height="2.5" fill="#222"/><rect x="311" y="559" width="1" height="4" fill="#222"/><rect x="338" y="559" width="1" height="2.5" fill="#222"/><rect x="365" y="559" width="1" height="4" fill="#222"/><rect x="391" y="559" width="1" height="2.5" fill="#222"/><rect x="418" y="559" width="1" height="4" fill="#222"/><rect x="445" y="559" width="1" height="2.5" fill="#222"/><rect x="472" y="559" width="1" height="4" fill="#222"/><rect x="499" y="559" width="1" height="2.5" fill="#222"/><rect x="526" y="559" width="1" height="4" fill="#222"/><rect x="553" y="559" width="1" height="2.5" fill="#222"/><rect x="607" y="559" width="1" height="4" fill="#222"/><rect x="634" y="559" width="1" height="4" fill="#222"/><rect x="661" y="559" width="1" height="2.5" fill="#222"/><rect x="688" y="559" width="1" height="4" fill="#222"/><rect x="715" y="559" width="1" height="2.5" fill="#222"/><rect x="742" y="559" width="1" height="4" fill="#222"/><rect x="769" y="559" width="1" height="2.5" fill="#222"/><rect x="796" y="559" width="1" height="4" fill="#222"/><rect x="823" y="559" width="1" height="2.5" fill="#222"/><rect x="849" y="559" width="1" height="4" fill="#222"/><rect x="876" y="559" width="1" height="2.5" fill="#222"/><rect x="903" y="559" width="1" height="4" fill="#222"/><rect x="930" y="559" width="1" height="2.5" fill="#222"/><rect x="957" y="559" width="1" height="4" fill="#222"/><rect x="984" y="559" width="1" height="2.5" fill="#222"/><rect x="1011" y="559" width="1" height="4" fill="#222"/><rect x="1038" y="559" width="1" height="2.5" fill="#222"/><rect x="1065" y="559" width="1" height="4" fill="#222"/><rect x="1092" y="559" width="1" height="2.5" fill="#222"/><rect x="1119" y="559" width="1" height="4" fill="#222"/><rect x="1146" y="559" width="1" height="2.5" fill="#222"/><rect x="1173" y="559" width="1" height="4" fill="#222"/><rect x="1200" y="559" width="1" height="2.5" fill="#222"/><rect x="1227" y="559" width="1" height="4" fill="#222"/><rect x="1227.95" y="559" width="1" height="4" fill="#222"/><rect x="580.06" y="559" width="1" height="4" fill="#222"/><rect x="38" y="25.55" width="1.5" height="1" fill="#222"/><rect x="38.5" y="59" width="2.5" height="1" fill="#222"/><rect x="37" y="92" width="4" height="1" fill="#222"/><rect x="38.5" y="125" width="2.5" height="1" fill="#222"/><rect x="38.5" y="159" width="2.5" height="1" fill="#222"/><rect x="38.5" y="192" width="2.5" height="1" fill="#222"/><rect x="37" y="225" width="4" height="1" fill="#222"/><rect x="38.5" y="258" width="2.5" height="1" fill="#222"/><rect x="38.5" y="292" width="2.5" height="1" fill="#222"/><rect x="38.5" y="325" width="2.5" height="1" fill="#222"/><rect x="37" y="358" width="4" height="1" fill="#222"/><rect x="38.5" y="391" width="2.5" height="1" fill="#222"/><rect x="38.5" y="425" width="2.5" height="1" fill="#222"/><rect x="38.5" y="458" width="2.5" height="1" fill="#222"/><rect x="37" y="491" width="4" height="1" fill="#222"/><rect x="38.5" y="524" width="2.5" height="1" fill="#222"/><rect x="37" y="558" width="4" height="1.2" fill="#111"/></svg>
<!-- vertical scrollbar -->
<div class="abs" style="left:1231px;top:22px;width:14.4px;height:537.6px;background:linear-gradient(90deg,#eef2fd 0,#cdd9fb 1.6px,#bccbf8 6px,#c2d0f9 11px,#e9eefc 13px,#f2f4fb 14.4px)"></div>
<div class="abs" style="left:1231px;top:22px;width:14.4px;height:14px;background:linear-gradient(90deg,#f0f3fd 0,#dbe3fa 2px,#d6dff9 11px,#eef1fb 14px);border-bottom:1px solid #eef2fd;box-sizing:border-box"><svg class="abs" style="left:0;top:0" width="14" height="14" viewBox="0 0 14 14"><path d="M2.6 9.2L6.4 5.2L10.2 9.2" fill="none" stroke="#3d3f7c" stroke-width="2.1"/></svg></div>
<div class="abs" style="left:1231px;top:543.5px;width:14.4px;height:16px;background:linear-gradient(90deg,#f0f3fd 0,#dbe3fa 2px,#d6dff9 11px,#eef1fb 14px);border-top:1px solid #eef2fd;box-sizing:border-box"><svg class="abs" style="left:0;top:0" width="14" height="15" viewBox="0 0 14 15"><path d="M2.8 5.6L6.4 9.4L10 5.6" fill="none" stroke="#3d4a8a" stroke-width="2"/></svg></div>
<!-- zoom slider -->
<div class="abs" style="left:1260.8px;top:47.5px;width:4.8px;height:478px;background:linear-gradient(90deg,#a29f97 0,#98958d 1px,#f6f5f1 1.6px,#fdfcfa 3.4px,#e6e4de 4.8px)"></div>
<svg class="abs" style="left:1252px;top:18px" width="26" height="22" viewBox="0 0 26 22"><path d="M5.6 17.4L10.9 12.4" stroke="#0c0c0c" stroke-width="2.4" stroke-linecap="round"/><circle cx="14.1" cy="9.1" r="4.5" fill="#f1f2fb" stroke="#26265e" stroke-width="1.15"/><path d="M11.3 9.1H16.9M14.1 6.3V11.9" stroke="#1c1f80" stroke-width="2"/></svg>
<svg class="abs" style="left:1252px;top:541px" width="26" height="22" viewBox="0 0 26 22"><path d="M5 17L10.6 11.6" stroke="#0c0c0c" stroke-width="2.3" stroke-linecap="round"/><circle cx="14" cy="8.6" r="4.3" fill="#f1f2fb" stroke="#3a3a4a" stroke-width="1.1"/><path d="M11.4 8.6H16.6" stroke="#1c1f80" stroke-width="2"/></svg>
<svg class="abs" style="left:1253px;top:521px" width="23" height="14" viewBox="0 0 23 14"><defs><linearGradient id="tg" x1="0" y1="0" x2="0" y2="1"><stop offset="0" stop-color="#f8fbf7"/><stop offset="0.55" stop-color="#eef5ec"/><stop offset="1" stop-color="#cfe8d0"/></linearGradient></defs><path d="M2.2 2.3H14.6L20 6.9L14.6 11.3H2.2Z" fill="url(#tg)" stroke="#8ccf98" stroke-width="1.1" stroke-linejoin="round"/><path d="M2.9 2.4V11.2" stroke="#48a95c" stroke-width="2.3"/><path d="M3 11.2H14.4" stroke="#9fd8a8" stroke-width="1.2"/></svg>
<!-- status fields -->
<div class="field" style="left:76px;top:588px;width:563px;height:20px"></div>
<div class="field" style="left:666.5px;top:588px;width:563px;height:20px"></div>
<div class="combo" style="left:362px;top:614.5px;width:211.5px;height:21px"><div class="dd"><svg width="13" height="17" viewBox="0 0 13 17"><path d="M3.2 6.6 L6.5 10 L9.8 6.6" fill="none" stroke="#4d6185" stroke-width="1.9"/></svg></div></div>
<div class="combo" style="left:362px;top:640px;width:211.5px;height:20.5px"><div class="dd"><svg width="13" height="17" viewBox="0 0 13 17"><path d="M3.2 6.6 L6.5 10 L9.8 6.6" fill="none" stroke="#4d6185" stroke-width="1.9"/></svg></div></div>
<div class="combo" style="left:623px;top:614.5px;width:154px;height:21px"><div class="dd"><svg width="13" height="17" viewBox="0 0 13 17"><path d="M3.2 6.6 L6.5 10 L9.8 6.6" fill="none" stroke="#4d6185" stroke-width="1.9"/></svg></div></div>
<div class="combo" style="left:623px;top:640px;width:154px;height:20.5px"><div class="dd"><svg width="13" height="17" viewBox="0 0 13 17"><path d="M3.2 6.6 L6.5 10 L9.8 6.6" fill="none" stroke="#4d6185" stroke-width="1.9"/></svg></div></div>
<div class="abs" style="left:626px;top:642px;width:134px;height:16px;background:#0a246a"></div>
<div class="btn" style="left:787.5px;top:615px;width:105px;height:19.5px"></div>
<div class="btn" style="left:902.5px;top:615px;width:68.5px;height:19.5px"></div>
<div class="btn" style="left:902.5px;top:640px;width:68.5px;height:19.5px;border-color:#1a3a7a;box-shadow:inset 0 0 0 1.5px #a9c3f0"></div>
<div class="abs" style="left:786.5px;top:644px;width:12.5px;height:12.5px;box-sizing:border-box;border:1px solid #1d5180;background:linear-gradient(135deg,#dcdcd4,#fff)"><svg width="11" height="11" viewBox="0 0 11 11" class="abs" style="left:0;top:0"><path d="M2.2 5.2L4.4 7.6L8.6 2.8" fill="none" stroke="#21a121" stroke-width="1.9"/></svg></div>
<span class="t" style="left:3.6px;top:3.5px;font-size:11px;font-weight:bold;color:#fff;transform:scaleX(1.016);text-shadow:1px 1px 0 #0a2a8c;">Частотный анализ</span>
<span class="t" style="left:5.1px;top:24.8px;font-size:12px;font-weight:bold;color:#000;transform:scaleX(0.937);">-42Дб</span>
<span class="t" style="left:6.5px;top:53.3px;font-size:12px;font-weight:normal;color:#000;transform:scaleX(0.921);">-45Дб</span>
<span class="t" style="left:5.1px;top:86.6px;font-size:12px;font-weight:bold;color:#000;transform:scaleX(0.937);">-48Дб</span>
<span class="t" style="left:6.5px;top:119.8px;font-size:12px;font-weight:normal;color:#000;transform:scaleX(0.921);">-51Дб</span>
<span class="t" style="left:6.5px;top:153.1px;font-size:12px;font-weight:normal;color:#000;transform:scaleX(0.921);">-54Дб</span>
<span class="t" style="left:6.5px;top:186.3px;font-size:12px;font-weight:normal;color:#000;transform:scaleX(0.921);">-57Дб</span>
<span class="t" style="left:5.1px;top:219.6px;font-size:12px;font-weight:bold;color:#000;transform:scaleX(0.937);">-60Дб</span>
<span class="t" style="left:6.5px;top:252.8px;font-size:12px;font-weight:normal;color:#000;transform:scaleX(0.921);">-63Дб</span>
<span class="t" style="left:6.5px;top:286.1px;font-size:12px;font-weight:normal;color:#000;transform:scaleX(0.921);">-66Дб</span>
<span class="t" style="left:6.5px;top:319.3px;font-size:12px;font-weight:normal;color:#000;transform:scaleX(0.921);">-69Дб</span>
<span class="t" style="left:5.1px;top:352.6px;font-size:12px;font-weight:bold;color:#000;transform:scaleX(0.937);">-72Дб</span>
<span class="t" style="left:6.5px;top:385.8px;font-size:12px;font-weight:normal;color:#000;transform:scaleX(0.921);">-75Дб</span>
<span class="t" style="left:6.5px;top:419.1px;font-size:12px;font-weight:normal;color:#000;transform:scaleX(0.921);">-78Дб</span>
<span class="t" style="left:6.5px;top:452.3px;font-size:12px;font-weight:normal;color:#000;transform:scaleX(0.921);">-81Дб</span>
<span class="t" style="left:5.1px;top:485.6px;font-size:12px;font-weight:bold;color:#000;transform:scaleX(0.937);">-84Дб</span>
<span class="t" style="left:6.5px;top:518.8px;font-size:12px;font-weight:normal;color:#000;transform:scaleX(0.921);">-87Дб</span>
<span class="t" style="left:5.1px;top:545.1px;font-size:12px;font-weight:bold;color:#000;transform:scaleX(0.937);">-90Дб</span>
<span class="t" style="left:42.5px;top:564.8px;font-size:12px;font-weight:bold;color:#000;transform:scaleX(0.949);">11Гц</span>
<span class="t" style="left:76.5px;top:564.8px;font-size:12px;font-weight:bold;color:#000;transform:scaleX(0.942);">1000Гц</span>
<span class="t" style="left:130.4px;top:564.8px;font-size:12px;font-weight:bold;color:#000;transform:scaleX(0.942);">2000Гц</span>
<span class="t" style="left:184.3px;top:564.8px;font-size:12px;font-weight:bold;color:#000;transform:scaleX(0.942);">3000Гц</span>
<span class="t" style="left:238.2px;top:564.8px;font-size:12px;font-weight:bold;color:#000;transform:scaleX(0.942);">4000Гц</span>
<span class="t" style="left:292.1px;top:564.8px;font-size:12px;font-weight:bold;color:#000;transform:scaleX(0.942);">5000Гц</span>
<span class="t" style="left:346.0px;top:564.8px;font-size:12px;font-weight:bold;color:#000;transform:scaleX(0.942);">6000Гц</span>
<span class="t" style="left:399.9px;top:564.8px;font-size:12px;font-weight:bold;color:#000;transform:scaleX(0.942);">7000Гц</span>
<span class="t" style="left:453.7px;top:564.8px;font-size:12px;font-weight:bold;color:#000;transform:scaleX(0.942);">8000Гц</span>
<span class="t" style="left:507.6px;top:564.8px;font-size:12px;font-weight:bold;color:#000;transform:scaleX(0.942);">9000Гц</span>
<span class="t" style="left:558.2px;top:564.8px;font-size:12px;font-weight:bold;color:#000;transform:scaleX(0.950);">10000Гц</span>
<span class="t" style="left:612.0px;top:564.8px;font-size:12px;font-weight:bold;color:#000;transform:scaleX(0.964);">11000Гц</span>
<span class="t" style="left:665.9px;top:564.8px;font-size:12px;font-weight:bold;color:#000;transform:scaleX(0.950);">12000Гц</span>
<span class="t" style="left:719.8px;top:564.8px;font-size:12px;font-weight:bold;color:#000;transform:scaleX(0.950);">13000Гц</span>
<span class="t" style="left:773.7px;top:564.8px;font-size:12px;font-weight:bold;color:#000;transform:scaleX(0.950);">14000Гц</span>
<span class="t" style="left:827.6px;top:564.8px;font-size:12px;font-weight:bold;color:#000;transform:scaleX(0.950);">15000Гц</span>
<span class="t" style="left:881.5px;top:564.8px;font-size:12px;font-weight:bold;color:#000;transform:scaleX(0.950);">16000Гц</span>
<span class="t" style="left:935.3px;top:564.8px;font-size:12px;font-weight:bold;color:#000;transform:scaleX(0.950);">17000Гц</span>
<span class="t" style="left:989.2px;top:564.8px;font-size:12px;font-weight:bold;color:#000;transform:scaleX(0.950);">18000Гц</span>
<span class="t" style="left:1043.1px;top:564.8px;font-size:12px;font-weight:bold;color:#000;transform:scaleX(0.950);">19000Гц</span>
<span class="t" style="left:1097.0px;top:564.8px;font-size:12px;font-weight:bold;color:#000;transform:scaleX(0.950);">20000Гц</span>
<span class="t" style="left:1182.8px;top:564.8px;font-size:12px;font-weight:bold;color:#000;transform:scaleX(0.959);">22033Гц</span>
<span class="t" style="left:41.6px;top:591.7px;font-size:11px;font-weight:normal;color:#000;transform:scaleX(0.904);">Cursor:</span>
<span class="t" style="left:81.7px;top:591.7px;font-size:11px;font-weight:normal;color:#000;transform:scaleX(0.927);">10517 Гц (E9) = -86 дБ</span>
<span class="t" style="left:641.0px;top:591.7px;font-size:11px;font-weight:normal;color:#000;transform:scaleX(0.832);">Peak:</span>
<span class="t" style="left:672.7px;top:591.7px;font-size:11px;font-weight:normal;color:#000;transform:scaleX(0.923);">10526 Гц (E9) = -86,8 дБ</span>
<span class="t" style="left:308.6px;top:618.5px;font-size:11px;font-weight:normal;color:#000;transform:scaleX(0.925);"><u>А</u>лгоритм:</span>
<span class="t" style="left:308.6px;top:644.2px;font-size:11px;font-weight:normal;color:#000;transform:scaleX(0.961);"><u>Ф</u>ункция:</span>
<span class="t" style="left:364.8px;top:618.5px;font-size:11px;font-weight:normal;color:#000;transform:scaleX(0.952);">Спектр</span>
<span class="t" style="left:364.8px;top:644.2px;font-size:11px;font-weight:normal;color:#000;transform:scaleX(0.920);">Hanning окно</span>
<span class="t" style="left:582.5px;top:618.5px;font-size:11px;font-weight:normal;color:#000;transform:scaleX(0.878);"><u>Р</u>азмер:</span>
<span class="t" style="left:582.5px;top:644.2px;font-size:11px;font-weight:normal;color:#000;transform:scaleX(0.924);"><u>О</u>сь:</span>
<span class="t" style="left:626.9px;top:618.5px;font-size:11px;font-weight:normal;color:#000;transform:scaleX(0.878);">4096</span>
<span class="t" style="left:627.0px;top:644.2px;font-size:11px;font-weight:normal;color:#fff;transform:scaleX(0.898);">Линейный масштаб</span>
<span class="t" style="left:801.0px;top:644.2px;font-size:11px;font-weight:normal;color:#000;transform:scaleX(0.943);"><u>С</u>етки</span>
<span class="t" style="left:794.0px;top:618.7px;font-size:11px;font-weight:normal;color:#000;transform:scaleX(0.975);"><u>Э</u>кспортировать...</span>
<span class="t" style="left:915.4px;top:618.7px;font-size:11px;font-weight:normal;color:#000;transform:scaleX(0.869);">R<u>e</u>plot...</span>
<span class="t" style="left:915.0px;top:644.2px;font-size:11px;font-weight:normal;color:#000;transform:scaleX(0.960);"><u>З</u>акрыть</span>
<!-- bottom strips -->
<div class="abs" style="left:0;top:666.6px;width:1280px;height:1.8px;background:linear-gradient(#c2bfb6,#a5a298 55%,#b8b5a8)"></div>
<div class="abs" style="left:0;top:668.4px;width:1280px;height:18px;background:linear-gradient(90deg,rgba(245,245,238,0.9),rgba(245,245,238,0) 90px),linear-gradient(#f2f0e2,#efecd8 35%,#eeead6 80%,#e4e9d6)"></div>
<div class="abs" style="left:0;top:686px;width:1280px;height:1.2px;background:#cfe0ee"></div>
<div class="abs" style="left:0;top:687.2px;width:1280px;height:4px;background:linear-gradient(#3f7fd0,#347cd8 40%,#327cdc)"></div>
<svg width="1280" height="691" viewBox="0 0 1280 691" style="position:absolute;left:0;top:0;pointer-events:none"><defs><linearGradient id="wg" gradientUnits="userSpaceOnUse" x1="0" y1="-67.3" x2="0" y2="1.0"><stop offset="0" stop-color="#4a9fe8" stop-opacity="0.36"/><stop offset="0.355" stop-color="#4a9fe8" stop-opacity="0.36"/><stop offset="0.36" stop-color="#a8d0f4" stop-opacity="0.22"/><stop offset="0.627" stop-color="#4a9fe8" stop-opacity="0.34"/><stop offset="0.632" stop-color="#247ec4" stop-opacity="0.62"/><stop offset="1" stop-color="#247ec4" stop-opacity="0.62"/></linearGradient><filter id="wf" x="-2%" y="-10%" width="104%" height="125%"><feComponentTransfer in="SourceAlpha" result="sa"><feFuncA type="linear" slope="20"/></feComponentTransfer><feOffset in="sa" dx="2.2" dy="2.2" result="off"/><feComposite in="off" in2="sa" operator="out" result="sh"/><feFlood flood-color="#333" flood-opacity="0.62"/><feComposite in2="sh" operator="in" result="shc"/><feMerge><feMergeNode in="shc"/><feMergeNode in="SourceGraphic"/></feMerge></filter></defs><g transform="translate(0,657) scale(1.08,0.98)" font-family="DejaVu Sans, sans-serif" font-weight="bold" font-size="77"><text x="725.7 766.1 814.3 837.1 915.7 963.4 1003.7 1020.8 1051.8 1092.6" y="0" fill="url(#wg)" filter="url(#wf)"><tspan font-size="88">t</tspan>elmari<tspan font-size="104">.</tspan>ru</text></g><g stroke="#5f9f9f" stroke-width="1.2" fill="none"><circle cx="800" cy="619.5" r="3.4"/><path d="M797.7 621.8L802.3 617.2"/></g><g stroke="#5f9f9f" stroke-width="1.2" fill="none"><circle cx="838.8" cy="619.5" r="3.4"/><path d="M836.5 621.8L841.0999999999999 617.2"/></g><g stroke="#5f9f9f" stroke-width="1.2" fill="none"><circle cx="894.4" cy="620.6" r="3.4"/><path d="M892.1 622.9L896.6999999999999 618.3000000000001"/></g><g stroke="#5f9f9f" stroke-width="1.2" fill="none"><circle cx="945" cy="619.5" r="3.4"/><path d="M942.7 621.8L947.3 617.2"/></g><g stroke="#8fd6e0" stroke-width="1.2" fill="none"><circle cx="1030.8" cy="651" r="3.4"/><path d="M1028.5 653.3L1033.1 648.7"/></g><g stroke="#5f9f9f" stroke-width="1.2" fill="none"><circle cx="1054.4" cy="620.6" r="3.4"/><path d="M1052.1000000000001 622.9L1056.7 618.3000000000001"/></g><g stroke="#5f9f9f" stroke-width="1.2" fill="none"><circle cx="1150" cy="620.6" r="3.4"/><path d="M1147.7 622.9L1152.3 618.3000000000001"/></g><g stroke="#8fd6e0" stroke-width="1.2" fill="none"><circle cx="1222.2" cy="651" r="3.4"/><path d="M1219.9 653.3L1224.5 648.7"/></g></svg>
</body></html>
